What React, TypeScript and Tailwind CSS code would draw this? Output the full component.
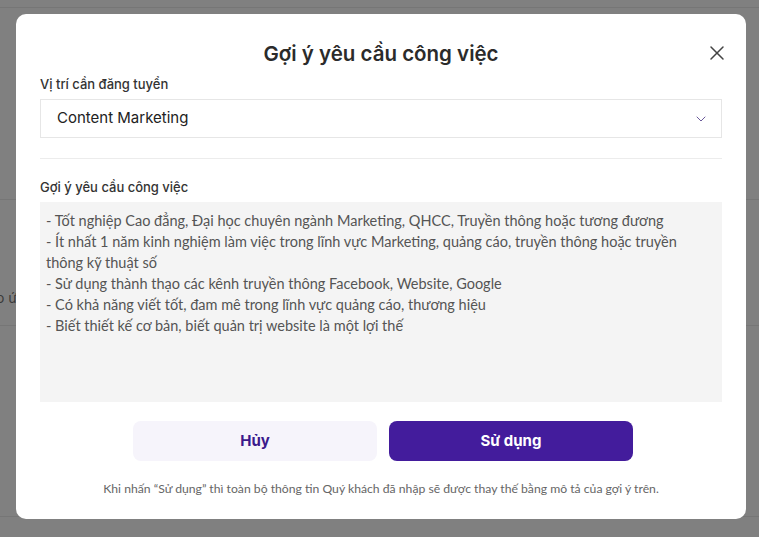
import React from 'react';
import { X, ChevronDown } from 'lucide-react';

const suggestion = [
  '- Tốt nghiệp Cao đẳng, Đại học chuyên ngành Marketing, QHCC, Truyền thông hoặc tương đương',
  '- Ít nhất 1 năm kinh nghiệm làm việc trong lĩnh vực Marketing, quảng cáo, truyền thông hoặc truyền thông kỹ thuật số',
  '- Sử dụng thành thạo các kênh truyền thông Facebook, Website, Google',
  '- Có khả năng viết tốt, đam mê trong lĩnh vực quảng cáo, thương hiệu',
  '- Biết thiết kế cơ bản, biết quản trị website là một lợi thế',
];

const App = () => {
  return (
    <div className="relative h-[537px] w-[759px] overflow-hidden bg-[#808080] font-['Inter',sans-serif]">
      {/* page behind the overlay */}
      <div className="h-[8px] border-b border-[#767676]" />
      <div className="h-[192px] border-b border-[#767676]" />
      <div className="h-[126px] border-b border-[#767676] pt-[88px] text-[14px] leading-[20px] text-[#3a3a3a]">
        <span className="-ml-[4px]">o ứng</span>
      </div>
      <div className="h-[191px] border-b border-[#767676]" />

      <div className="absolute left-[16px] top-[14px] w-[730px] rounded-[10px] bg-white px-[24px] pb-[21px] pt-[25px]">
        <div className="relative flex items-center justify-center">
          <h2 className="text-[20.5px] font-semibold leading-[30px] text-[#2b2b2b]">Gợi ý yêu cầu công việc</h2>
          <button className="absolute right-[-7px] top-[2px] text-[#444]">
            <X className="h-[24px] w-[24px]" strokeWidth={1.5} />
          </button>
        </div>

        <label className="mt-[6px] block text-[13px] font-medium leading-[18px] text-[#333]">Vị trí cần đăng tuyển</label>
        <div className="mt-[6px] flex h-[39px] items-center justify-between border border-[#e6e6e6] pl-[16px] pr-[12px]">
          <span className="text-[15px] text-[#222]">Content Marketing</span>
          <ChevronDown className="h-[16px] w-[16px] text-[#6b5a9a]" strokeWidth={1.5} />
        </div>

        <div className="mt-[20px] border-t border-[#ececec]" />

        <label className="mt-[19px] block text-[13px] font-medium leading-[18px] text-[#333]">Gợi ý yêu cầu công việc</label>
        <div className="mt-[6px] h-[200px] bg-[#f4f4f4] py-[8px] pl-[6px] pr-[30px] font-['Lato',sans-serif] text-[14.5px] leading-[21px] text-[#555]">
          {suggestion.map((line, i) => (
            <div key={i}>{line}</div>
          ))}
        </div>

        <div className="mt-[19px] flex justify-center gap-[12px] pl-[4px]">
          <button className="h-[40px] w-[244px] rounded-[8px] bg-[#f6f4fb] text-[15px] font-bold text-[#3b1a8c]">Hủy</button>
          <button className="h-[40px] w-[244px] rounded-[8px] bg-[#431c9c] text-[15px] font-bold text-white">Sử dụng</button>
        </div>

        <p className="mt-[19px] text-center font-['Lato',sans-serif] text-[12.2px] leading-[18px] text-[#666]">
          Khi nhấn “Sử dụng” thì toàn bộ thông tin Quý khách đã nhập sẽ được thay thế bằng mô tả của gợi ý trên.
        </p>
      </div>
    </div>
  );
};

export default App;
